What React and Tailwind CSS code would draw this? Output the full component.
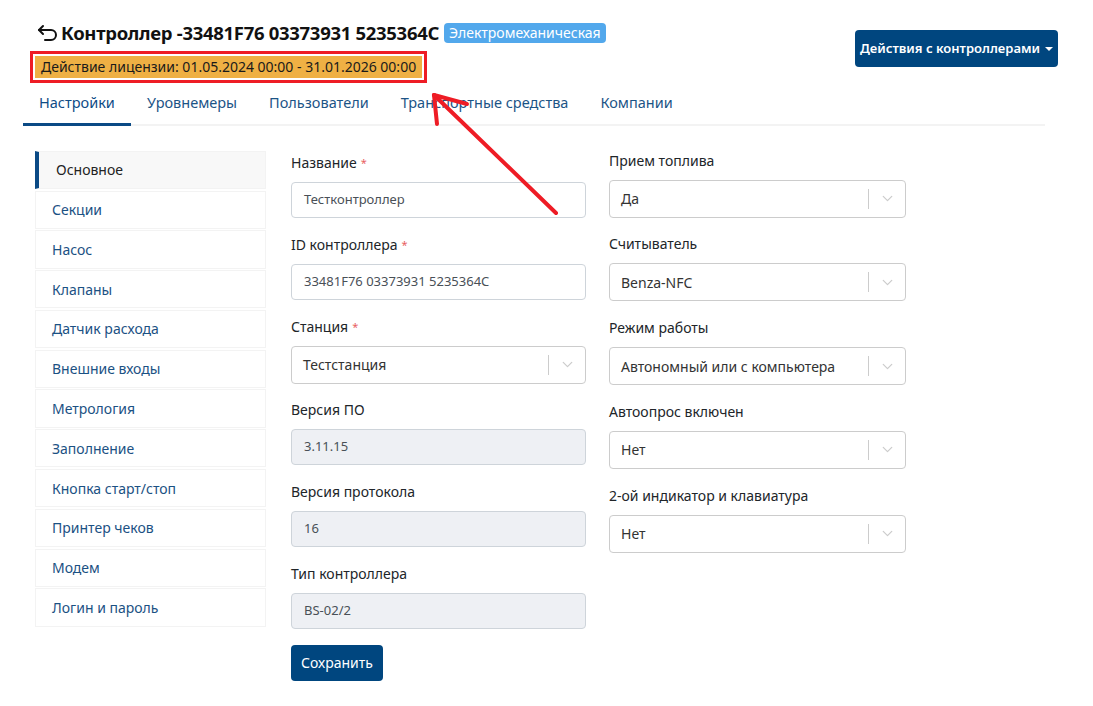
import { ChevronDown } from 'lucide-react'

const menu = [
  'Основное',
  'Секции',
  'Насос',
  'Клапаны',
  'Датчик расхода',
  'Внешние входы',
  'Метрология',
  'Заполнение',
  'Кнопка старт/стоп',
  'Принтер чеков',
  'Модем',
  'Логин и пароль',
]

const tabs = ['Настройки', 'Уровнемеры', 'Пользователи', 'Транспортные средства', 'Компании']

function Label({ children, required }) {
  return (
    <div className="mb-[10px] h-[19px] text-[14px] leading-[19px] text-[#212529]">
      {children}
      {required && <span className="ml-[4px] align-top text-[11px] text-[#e8605f]">*</span>}
    </div>
  )
}

function Input({ value, disabled }) {
  return (
    <div
      className={
        'flex h-[36px] items-center rounded-[4px] border border-[#ced4da] px-[12px] text-[13px] text-[#495057] ' +
        (disabled ? 'bg-[#eef0f4]' : 'bg-white')
      }
    >
      {value}
    </div>
  )
}

function Select({ value }) {
  return (
    <div className="flex h-[38px] items-center rounded-[4px] border border-[#cccccc] bg-white pl-[11px] text-[14px] text-[#333]">
      <span className="flex-1">{value}</span>
      <span className="h-[20px] w-px bg-[#cccccc]" />
      <span className="flex w-[36px] justify-center text-[#cccccc]">
        <ChevronDown size={17} strokeWidth={1.75} />
      </span>
    </div>
  )
}

export default function App() {
  return (
    <div
      className="relative min-h-[706px] bg-white"
      style={{ fontFamily: '"Noto Sans", "Open Sans", sans-serif' }}
    >
      <div className="px-[23px] pt-[20px]">
        <div className="flex items-start justify-between">
          <div className="pl-[14px]">
            <div className="flex items-center">
              <svg width="22" height="20" viewBox="0 0 22 20" fill="none" stroke="#111" strokeWidth="2" strokeLinecap="round" strokeLinejoin="round">
                <path d="M6 3 L2 7 L6 11" />
                <path d="M2 7 H14 a5 5 0 0 1 0 10 H8" />
              </svg>
              <span className="ml-[2px] text-[18.5px] font-bold leading-[26px] tracking-[-0.3px] text-[#111]">
                Контроллер -33481F76 03373931 5235364C
              </span>
              <span className="ml-[5px] rounded-[4px] bg-[#52a8ec] px-[5px] py-[1px] text-[14px] leading-[18px] text-white">
                Электромеханическая
              </span>
            </div>
            <div className="-ml-[7px] mt-[5px] inline-block border-[3px] border-[#ee1c25] p-[2px]">
              <div className="bg-[#efb044] px-[6px] text-[14px] leading-[22px] text-[#1a1a1a]">
                Действие лицензии: 01.05.2024 00:00 - 31.01.2026 00:00
              </div>
            </div>
          </div>
          <button className="mr-[12px] mt-[10px] flex h-[37px] w-[203px] items-center justify-center gap-[5px] rounded-[4px] bg-[#00467f] text-[13px] font-semibold text-white">
            Действия с контроллерами
            <span className="mt-[1px] border-x-[4px] border-t-[4px] border-x-transparent border-t-white" />
          </button>
        </div>

        <div className="mr-[25px] mt-[6px] flex border-b-2 border-[#f3f3f3]">
          {tabs.map((t, i) => (
            <div
              key={t}
              className={
                'relative -mb-[2px] px-[16px] pb-[9px] pt-[3px] text-[14.5px] ' +
                (i === 0 ? 'border-b-[3px] border-[#0b4a85] text-[#0e4c86]' : 'border-b-[3px] border-transparent text-[#1c5486]')
              }
            >
              {t}
            </div>
          ))}
        </div>

        <div className="mt-[25px] flex pl-[12px]">
          <div className="w-[231px] flex-none">
            {menu.map((m, i) => (
              <div
                key={m}
                className={
                  'flex h-[38.2px] items-center border border-[#f3f3f3] text-[14px] ' +
                  (i === 0
                    ? 'border-l-[4px] border-l-[#0b4a85] bg-[#f8f8f8] pl-[17px] text-[#222]'
                    : 'mt-[1.6px] bg-white pl-[16px] text-[#1b5183]')
                }
              >
                {m}
              </div>
            ))}
          </div>

          <div className="ml-[25px] w-[295px] flex-none pt-[2px]">
            <Label required>Название</Label>
            <Input value="Тестконтроллер" />
            <div className="mt-[17px]">
              <Label required>ID контроллера</Label>
              <Input value="33481F76 03373931 5235364C" />
            </div>
            <div className="mt-[17px]">
              <Label required>Станция</Label>
              <Select value="Тестстанция" />
            </div>
            <div className="mt-[16px]">
              <Label>Версия ПО</Label>
              <Input value="3.11.15" disabled />
            </div>
            <div className="mt-[17px]">
              <Label>Версия протокола</Label>
              <Input value="16" disabled />
            </div>
            <div className="mt-[17px]">
              <Label>Тип контроллера</Label>
              <Input value="BS-02/2" disabled />
            </div>
            <button className="mt-[16px] h-[36px] rounded-[4px] bg-[#00467f] px-[10px] text-[14px] text-white">
              Сохранить
            </button>
          </div>

          <div className="ml-[23px] w-[297px] flex-none">
            {[
              ['Прием топлива', 'Да'],
              ['Считыватель', 'Benza-NFC'],
              ['Режим работы', 'Автономный или с компьютера'],
              ['Автоопрос включен', 'Нет'],
              ['2-ой индикатор и клавиатура', 'Нет'],
            ].map(([l, v], i) => (
              <div key={l} className={i === 0 ? '' : 'mt-[16.7px]'}>
                <Label>{l}</Label>
                <Select value={v} />
              </div>
            ))}
          </div>
        </div>
      </div>

      <svg
        className="pointer-events-none absolute left-0 top-0"
        width="1093"
        height="706"
        fill="none"
        stroke="#ee1c25"
        strokeWidth="4"
        strokeLinecap="round"
      >
        <path d="M556 213 L434 95" />
        <path d="M434 95 L437 124" />
        <path d="M434 95 L467 104" />
      </svg>
    </div>
  )
}
